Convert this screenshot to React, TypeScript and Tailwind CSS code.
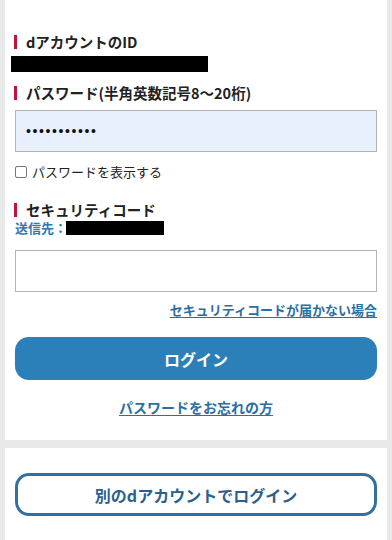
import React from "react";

const font = { fontFamily: '"Noto Sans CJK JP", "Noto Sans", sans-serif' };

function Label({ children }: { children: React.ReactNode }) {
  return (
    <div className="flex items-center h-[20px]">
      <div className="w-[3px] h-[14px] bg-[#c0143c] -ml-px" />
      <span className="ml-[9px] text-[14.5px] font-bold text-[#222] leading-[20px]">{children}</span>
    </div>
  );
}

export default function App() {
  return (
    <div className="min-h-[540px] bg-[#e9e9e9] px-[5px] pb-[3px]" style={font}>
      <div className="bg-white px-[10px] pt-[32px] pb-[24px]">
        <Label>dアカウントのID</Label>
        <div className="mt-[4px] -ml-[4px] h-[16px] w-[197px] bg-black" />
        <div className="mt-[11px]">
          <Label>パスワード(半角英数記号8〜20桁)</Label>
        </div>
        <div className="mt-[7px] h-[42px] border border-[#b3b3b3] bg-[#e8f0fe] flex items-center pl-[10px]">
          <span
            className="text-[14px] tracking-[1.6px] text-[#111] leading-none"
            style={{ fontFamily: '"Liberation Sans", sans-serif' }}
          >
            •••••••••••
          </span>
        </div>
        <div className="mt-[10px] flex items-center h-[20px]">
          <div className="w-[12px] h-[12px] border border-[#767676] rounded-[2px] bg-white" />
          <span className="ml-[5px] text-[13px] text-[#222] leading-[20px]">パスワードを表示する</span>
        </div>
        <div className="mt-[18px]">
          <Label>セキュリティコード</Label>
        </div>
        <div className="flex items-center h-[16px]">
          <span className="text-[13px] font-bold text-[#2b7ab5] leading-[16px]">送信先：</span>
          <div className="ml-[-1px] h-[14px] w-[98px] bg-black" />
        </div>
        <div className="mt-[14px] h-[42px] border border-[#b3b3b3] bg-white" />
        <div className="mt-[7px] text-right leading-[18px]">
          <a className="text-[13px] font-bold text-[#2a6fa3] underline underline-offset-2">
            セキュリティコードが届かない場合
          </a>
        </div>
        <button className="mt-[18px] w-full h-[43px] rounded-[14px] bg-[#2b80b9] text-white text-[16px] font-bold flex items-center justify-center">
          ログイン
        </button>
        <div className="mt-[17px] text-center leading-[18px]">
          <a className="text-[14px] font-bold text-[#2a6fa3] underline underline-offset-2">パスワードをお忘れの方</a>
        </div>
      </div>
      <div className="mt-[8px] bg-white px-[10px] pt-[25px] pb-[25px]">
        <button className="w-full h-[43px] rounded-[14px] border-[3px] border-[#33709f] bg-white text-[#2d5f8c] text-[16px] font-bold flex items-center justify-center">
          別のdアカウントでログイン
        </button>
      </div>
    </div>
  );
}
